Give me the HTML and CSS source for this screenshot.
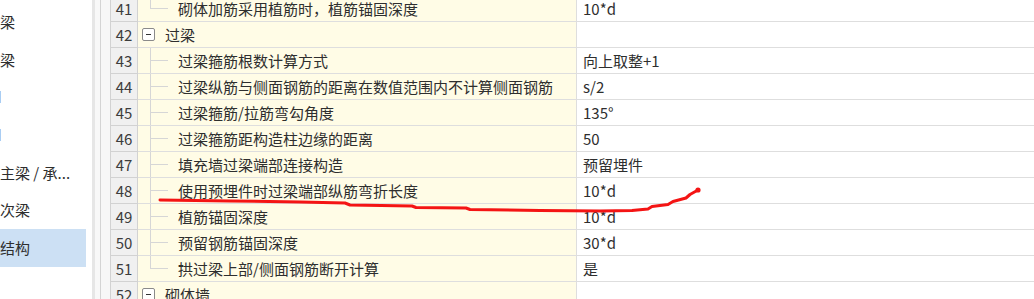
FILE: index.html
```html
<html lang="zh-CN">
<head>
    <meta charset="utf-8">
    <meta name="viewport" content="width=device-width">
    <title>计算设置</title>
    <link rel="stylesheet" href="styles.css">
</head>
<body>

<div class="app">
    <div class="side">
        <div class="side-item">梁</div>
        <div class="side-item">梁</div>
        <div class="side-item"><span class="cut-icon"></span></div>
        <div class="side-item"><span class="cut-icon"></span></div>
        <div class="side-item">主梁 / 承...</div>
        <div class="side-item">次梁</div>
        <div class="side-item selected">结构</div>
    </div>
    <div class="splitter"></div>

    <div class="grid-wrap">
        <div class="props">
            <div class="row">
                <div class="num">41</div>
                <div class="name child last">砌体加筋采用植筋时，植筋锚固深度</div>
                <div class="val">10*d</div>
            </div>
            <div class="row">
                <div class="num">42</div>
                <div class="name group"><span class="toggle"></span>过梁</div>
                <div class="val"></div>
            </div>
            <div class="row">
                <div class="num">43</div>
                <div class="name child">过梁箍筋根数计算方式</div>
                <div class="val">向上取整+1</div>
            </div>
            <div class="row">
                <div class="num">44</div>
                <div class="name child">过梁纵筋与侧面钢筋的距离在数值范围内不计算侧面钢筋</div>
                <div class="val">s/2</div>
            </div>
            <div class="row">
                <div class="num">45</div>
                <div class="name child">过梁箍筋/拉筋弯勾角度</div>
                <div class="val">135°</div>
            </div>
            <div class="row">
                <div class="num">46</div>
                <div class="name child">过梁箍筋距构造柱边缘的距离</div>
                <div class="val">50</div>
            </div>
            <div class="row">
                <div class="num">47</div>
                <div class="name child">填充墙过梁端部连接构造</div>
                <div class="val">预留埋件</div>
            </div>
            <div class="row">
                <div class="num">48</div>
                <div class="name child">使用预埋件时过梁端部纵筋弯折长度</div>
                <div class="val">10*d</div>
            </div>
            <div class="row">
                <div class="num">49</div>
                <div class="name child">植筋锚固深度</div>
                <div class="val">10*d</div>
            </div>
            <div class="row">
                <div class="num">50</div>
                <div class="name child">预留钢筋锚固深度</div>
                <div class="val">30*d</div>
            </div>
            <div class="row">
                <div class="num">51</div>
                <div class="name child last">拱过梁上部/侧面钢筋断开计算</div>
                <div class="val">是</div>
            </div>
            <div class="row">
                <div class="num">52</div>
                <div class="name group"><span class="toggle"></span>砌体墙</div>
                <div class="val"></div>
            </div>
        </div>
    </div>
</div>

<!-- red pen mark drawn over the sheet -->
<svg class="pen" width="1034" height="299" viewBox="0 0 1034 299">
    <path d="M160 200 L230 201 L300 202 L345 203 L350 205 L412 206 L416 207.5 L466 208 L470 209.5 L540 210.5 L600 211 L632 210.5 L648 209 L652 206.5 L668 204.5 L673 201.5 L686 198 L690 194.5 L698 190"
          fill="none" stroke="#f41414" stroke-width="3" stroke-linecap="round" stroke-linejoin="round"/>
    <circle cx="698" cy="190" r="2.6" fill="#f41414"/>
</svg>

</body>
</html>
```

FILE: styles.css
```css
body {
    margin: 0;
    padding: 0;
    overflow: hidden;
    background: #fff;
    font-family: "Noto Sans CJK SC", "Microsoft YaHei", sans-serif;
    font-size: 15px;
    color: #2e2e2e;
}

.app {
    display: flex;
    width: 1034px;
    height: 299px;
    overflow: hidden;
}

/* left tree panel (cut off at the screen edge) */
.side {
    width: 92px;
    flex-shrink: 0;
    padding-top: 3px;
    background: #fff;
}

.side-item {
    height: 37.7px;
    line-height: 37.7px;
    width: 86px;
    white-space: nowrap;
    overflow: hidden;
    position: relative;
}

.side-item.selected {
    background: #cce0f4;
}

.cut-icon {
    position: absolute;
    left: 0;
    top: 13px;
    width: 1px;
    height: 12px;
    background: #a9cdf3;
}

.splitter {
    width: 5px;
    flex-shrink: 0;
    border-left: 3px solid #e6e6e6;
    background: #f8f8f8;
}

.grid-wrap {
    flex: 1;
    border-left: 1px solid #d4d4d4;
    padding-left: 9px;
    background: #f7f7f7;
}

.props {
    margin-top: -4px;
    background: #fff;
}

.row {
    display: grid;
    grid-template-columns: 28px 439px 1fr;
    height: 26px;
}

.row > div {
    border-bottom: 1px solid #dedede;
    line-height: 25px;
    white-space: nowrap;
    overflow: hidden;
}

.num {
    background: #f0f0f0;
    border-left: 1px solid #d2d2d2;
    border-right: 1px solid #d2d2d2;
    border-bottom-color: #d2d2d2 !important;
    text-align: center;
    color: #3c3c3c;
}

.name {
    background: #fffce6;
    border-right: 1px solid #dedede;
    position: relative;
}

.val {
    padding-left: 6px;
}

/* tree connector lines */
.name.child {
    padding-left: 40px;
}

.name.child::before {
    content: "";
    position: absolute;
    left: 12px;
    top: 0;
    height: 26px;
    border-left: 1px solid #d6d6d6;
}

.name.child.last::before {
    height: 12px;
}

.name.child::after {
    content: "";
    position: absolute;
    left: 12px;
    top: 12px;
    width: 18px;
    border-top: 1px solid #d6d6d6;
}

.name.group {
    padding-left: 27px;
}

.toggle {
    position: absolute;
    left: 4px;
    top: 6px;
    width: 11px;
    height: 11px;
    border: 1px solid #8a8a8a;
    border-radius: 2px;
    background: #fff;
}

.toggle::after {
    content: "";
    position: absolute;
    left: 3px;
    top: 5px;
    width: 5px;
    border-top: 1px solid #333;
}

.pen {
    position: absolute;
    left: 0;
    top: 0;
    pointer-events: none;
}
```
